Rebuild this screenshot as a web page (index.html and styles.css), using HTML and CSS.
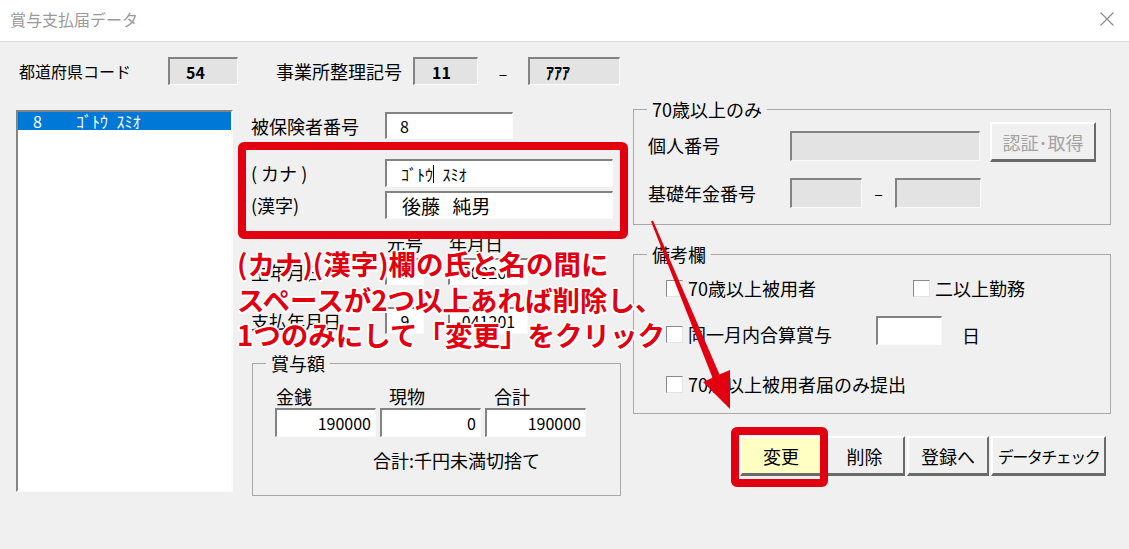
FILE: index.html
```html
<!DOCTYPE html>
<html lang="ja">
<head>
    <meta charset="UTF-8">
    <title>賞与支払届データ</title>
    <link rel="stylesheet" href="styles.css">
</head>
<body>
    <div class="titlebar">
        <span class="title">賞与支払届データ</span>
        <svg class="close" width="16" height="16" viewBox="0 0 16 16"><path d="M1.5 1.5 L14.5 14.5 M14.5 1.5 L1.5 14.5" stroke="#8a8a8a" stroke-width="1.1" fill="none"/></svg>
    </div>

    <!-- office header -->
    <div class="top-row">
        <span class="pref-lbl">都道府県コード</span>
        <span class="field ro strong pref">54</span>
        <span class="lbl office-lbl">事業所整理記号</span>
        <span class="field ro strong office1">11</span>
        <span class="dash">–</span>
        <span class="field ro strong office2">ｱｱｱ</span>
    </div>

    <div class="main">
        <!-- employee list -->
        <div class="listbox">
            <div class="list-row selected"><span class="no">8</span><span class="kana">ｺﾞﾄｳ ｽﾐｵ</span></div>
        </div>

        <!-- employee detail -->
        <div class="center">
            <div class="row first-row">
                <span class="lbl key">被保険者番号</span>
                <span class="field insured">8</span>
            </div>

            <div class="name-block">
                <div class="row name-row">
                    <span class="lbl key">( カナ )</span>
                    <span class="field name kana">ｺﾞﾄｳ<span class="caret"></span> ｽﾐｵ</span>
                </div>
                <div class="row name-row kanji-row">
                    <span class="lbl key">(漢字)</span>
                    <span class="field name kanji">後藤  純男</span>
                </div>
                <div class="mark name-mark"></div>
            </div>

            <div class="row date-head">
                <span class="key"></span>
                <span class="era-head">元号</span>
                <span class="ymd-head">年月日</span>
            </div>
            <div class="row date-row birth-row">
                <span class="lbl key">生年月日</span>
                <span class="field era">5</span>
                <span class="field ymd">300205</span>
            </div>
            <div class="row date-row pay-row">
                <span class="lbl key">支払年月日</span>
                <span class="field era">9</span>
                <span class="field ymd">041201</span>
            </div>

            <fieldset class="group bonus">
                <legend>賞与額</legend>
                <div class="amount-grid">
                    <span class="amount-lbl">金銭</span>
                    <span class="amount-lbl pad">現物</span>
                    <span class="amount-lbl pad">合計</span>
                    <span class="field num">190000</span>
                    <span class="field num">0</span>
                    <span class="field num">190000</span>
                </div>
                <div class="bonus-note">合計:千円未満切捨て</div>
            </fieldset>
        </div>

        <!-- right side -->
        <div class="right">
            <fieldset class="group senior">
                <legend>70歳以上のみ</legend>
                <div class="row mynumber-row">
                    <span class="lbl rkey mn-lbl">個人番号</span>
                    <span class="field ro mynumber"></span>
                    <span class="btn disabled auth">認証･取得</span>
                </div>
                <div class="row pension-row">
                    <span class="lbl rkey">基礎年金番号</span>
                    <span class="field ro pen1"></span>
                    <span class="pen-dash">–</span>
                    <span class="field ro pen2"></span>
                </div>
            </fieldset>

            <fieldset class="group remarks">
                <legend>備考欄</legend>
                <div class="row check-row r1">
                    <label class="check-item wide"><span class="check"></span><span class="lbl">70歳以上被用者</span></label>
                    <label class="check-item"><span class="check"></span><span class="lbl">二以上勤務</span></label>
                </div>
                <div class="row check-row r2">
                    <label class="check-item mid"><span class="check"></span><span class="lbl">同一月内合算賞与</span></label>
                    <span class="field day"></span>
                    <span class="lbl day-lbl">日</span>
                </div>
                <div class="row check-row r3">
                    <label class="check-item"><span class="check"></span><span class="lbl">70歳以上被用者届のみ提出</span></label>
                </div>
            </fieldset>

            <div class="buttons">
                <div class="btn-wrap">
                    <span class="btn primary">変更</span>
                    <div class="mark btn-mark"></div>
                </div>
                <span class="btn del">削除</span>
                <span class="btn reg">登録へ</span>
                <span class="btn chk">データチェック</span>
            </div>
        </div>
    </div>

    <!-- annotation overlay -->
    <div class="note">
        (カナ)(漢字)欄の氏と名の間に<br>
        スペースが2つ以上あれば削除し、<br>
        1つのみにして「変更」をクリック
    </div>
    <svg class="arrow" width="1129" height="549" viewBox="0 0 1129 549">
        <polygon points="653,220.5 719.5,374.5 730,370 730,409 703,382 712.5,377.8 651,221.5" fill="#e20010"/>
    </svg>
</body>
</html>
```

FILE: styles.css
```css
body {
    margin: 0;
    width: 1129px;
    height: 549px;
    overflow: hidden;
    position: relative;
    background: #f0f0f0;
    font-family: "Noto Sans CJK JP", "Noto Sans", sans-serif;
    font-size: 18px;
    color: #000;
}

.titlebar {
    height: 41px;
    background: #fff;
    border-bottom: 1px solid #dcdcdc;
    display: flex;
    align-items: center;
    justify-content: space-between;
    padding: 0 14px 0 10px;
}

.title {
    font-size: 16px;
    line-height: 20px;
    color: #9a9a9a;
    margin-top: -3px;
}

.close {
    margin-top: -4px;
}

.lbl {
    line-height: 20px;
    white-space: pre;
}

/* sunken edit box */
.field {
    display: flex;
    align-items: center;
    box-sizing: border-box;
    background: #fff;
    border-style: solid;
    border-width: 2px 1px 1px 2px;
    border-color: #838383 #fbfbfb #fbfbfb #838383;
    font-size: 16px;
    white-space: pre;
}

.field.ro {
    background: #e3e3e3;
}

.strong {
    font-weight: bold;
}

.kana {
    word-spacing: 5px;
}

.top-row {
    display: flex;
    align-items: center;
    height: 28px;
    padding: 15px 0 0 19px;
}

.top-row .field {
    height: 28px;
}

.pref-lbl {
    width: 149px;
    font-size: 16px;
    line-height: 20px;
}

.pref {
    width: 70px;
    padding-left: 16px;
}

.office-lbl {
    width: 137px;
    margin-left: 38px;
}

.office1 {
    width: 65px;
    padding-left: 17px;
}

.dash {
    width: 50px;
    text-align: center;
    font-size: 16px;
    padding-top: 4px;
}

.office2 {
    width: 92px;
    padding-left: 16px;
}

.main {
    display: flex;
    align-items: flex-start;
    margin-top: 14px;
}

.listbox {
    width: 217px;
    height: 382px;
    margin: 11px 0 0 16px;
    box-sizing: border-box;
    background: #fff;
    border: 2px solid;
    border-color: #838383 #fbfbfb #fbfbfb #838383;
}

.list-row {
    display: flex;
    height: 18px;
    line-height: 18px;
    font-size: 16px;
    padding-left: 15px;
    white-space: pre;
}

.list-row.selected {
    background: #0078d7;
    color: #fff;
}

.list-row .no {
    width: 43px;
}

/* center column */
.center {
    width: 400px;
    padding-left: 18px;
    box-sizing: border-box;
}

.row {
    display: flex;
    align-items: center;
}

.key {
    width: 134px;
    flex-shrink: 0;
}

.first-row {
    margin-top: 13px;
    height: 27px;
}

.insured {
    width: 128px;
    height: 27px;
    padding-left: 13px;
}

.name-block {
    position: relative;
    margin-top: 20px;
}

.name-row {
    height: 28px;
}

.kanji-row {
    margin-top: 4px;
}

.name {
    width: 228px;
    height: 28px;
    padding-left: 14px;
}

.kanji {
    font-size: 19px;
    padding-left: 15px;
    word-spacing: 2px;
}

.caret {
    display: inline-block;
    width: 1px;
    height: 18px;
    background: #000;
}

.mark {
    position: absolute;
    border: 8px solid #e20010;
    border-radius: 6px;
}

.name-mark {
    top: -17px;
    left: -13px;
    right: 5px;
    bottom: -20px;
}

.date-head {
    margin-top: 14px;
    height: 20px;
    line-height: 20px;
}

.era-head {
    width: 62px;
    padding-left: 2px;
}

.date-row {
    height: 27px;
}

.birth-row {
    margin-top: 5px;
}

.pay-row {
    margin-top: 22px;
}

.era {
    width: 39px;
    height: 27px;
    justify-content: center;
}

.ymd {
    width: 80px;
    height: 27px;
    margin-left: 24px;
    justify-content: center;
}

/* group boxes */
.group {
    margin: 0;
    padding: 0;
    min-width: 0;
    box-sizing: border-box;
    border: 1px solid #a8a8a8;
}

.group legend {
    margin-left: 13px;
    padding: 0 5px;
    line-height: 20px;
    font-size: 18px;
}

.bonus {
    margin: 19px 0 0 1px;
    width: 369px;
    height: 143px;
}

.amount-grid {
    display: grid;
    grid-template-columns: 101px 101px 101px;
    grid-template-rows: 22px 29px;
    column-gap: 4px;
    margin: 13px 0 0 22px;
}

.amount-lbl {
    line-height: 20px;
    padding-left: 1px;
}

.amount-lbl.pad {
    padding-left: 9px;
}

.num {
    justify-content: flex-end;
    padding-right: 4px;
}

.bonus-note {
    margin: 13px 0 0 120px;
    line-height: 20px;
}

/* right column */
.right {
    width: 478px;
}

.senior {
    height: 126px;
}

.rkey {
    width: 142px;
    padding-left: 14px;
    flex-shrink: 0;
}

.mynumber-row {
    margin-top: 3px;
    height: 40px;
    align-items: flex-end;
}

.mn-lbl {
    margin-bottom: 7px;
}

.mynumber {
    width: 190px;
    height: 30px;
    margin-bottom: 1px;
}

.btn {
    display: flex;
    align-items: center;
    justify-content: center;
    box-sizing: border-box;
    height: 40px;
    background: #f0f0f0;
    border-style: solid;
    border-width: 2px 2px 3px 2px;
    border-color: #fff #6a6a6a #6a6a6a #fff;
    font-size: 18px;
    white-space: pre;
}

.btn.disabled {
    color: #a3a3a3;
}

.auth {
    width: 106px;
    margin-left: 10px;
}

.pension-row {
    margin-top: 16px;
    height: 30px;
}

.pen1 {
    width: 72px;
    height: 30px;
}

.pen-dash {
    width: 33px;
    text-align: center;
    font-size: 16px;
}

.pen2 {
    width: 86px;
    height: 30px;
}

.remarks {
    margin-top: 19px;
    height: 170px;
}

.check-row {
    padding-left: 32px;
}

.check-item {
    display: flex;
    align-items: center;
}

.check-item.wide {
    width: 247px;
}

.check-item.mid {
    width: 210px;
}

.check {
    width: 17px;
    height: 17px;
    box-sizing: border-box;
    background: #fff;
    border: 1px solid;
    border-color: #8a8a8a #e4e4e4 #e4e4e4 #8a8a8a;
    margin-right: 5px;
    flex-shrink: 0;
}

.r1 {
    margin-top: 12px;
    height: 24px;
}

.r2 {
    margin-top: 16px;
    height: 29px;
    align-items: flex-end;
}

.r2 .check-item {
    margin-bottom: 1px;
}

.day {
    width: 66px;
    height: 29px;
}

.day-lbl {
    margin-left: 20px;
}

.r3 {
    margin-top: 27px;
    height: 24px;
}

.buttons {
    display: flex;
    justify-content: flex-end;
    gap: 2px;
    margin-top: 22px;
    padding-right: 5px;
}

.btn-wrap {
    position: relative;
}

.primary {
    width: 82px;
    background: #ffffc4;
}

.btn-mark {
    top: -9px;
    left: -9px;
    right: -6px;
    bottom: -11px;
}

.del {
    width: 81px;
}

.reg {
    width: 82px;
}

.chk {
    width: 115px;
    font-size: 16px;
    letter-spacing: -1.5px;
}

/* overlay annotation */
.note {
    position: absolute;
    left: 237px;
    top: 246px;
    font-size: 27.5px;
    font-weight: bold;
    line-height: 35.5px;
    color: #e20010;
    white-space: nowrap;
    text-shadow:
        2px 0 #fff, -2px 0 #fff, 0 2px #fff, 0 -2px #fff,
        1.5px 1.5px #fff, -1.5px 1.5px #fff, 1.5px -1.5px #fff, -1.5px -1.5px #fff,
        0 0 3px rgba(0, 0, 0, 0.25);
}

.arrow {
    position: absolute;
    left: 0;
    top: 0;
    pointer-events: none;
}
```
